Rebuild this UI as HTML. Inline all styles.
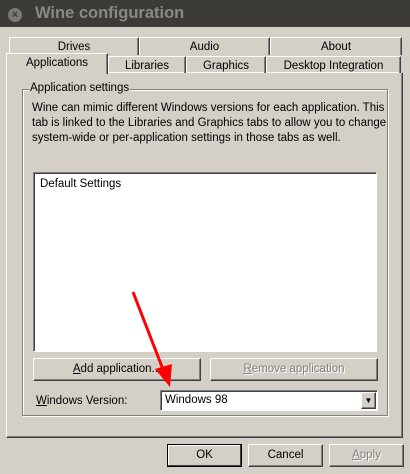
<!DOCTYPE html>
<html><head><style>
*{margin:0;padding:0;box-sizing:border-box}
body{width:410px;height:474px;background:#d4d0c8;font-family:"Liberation Sans",sans-serif;font-size:11.5px;color:#000;position:relative;overflow:hidden}
.a{position:absolute}
.tab{position:absolute;border:1px solid #fff;border-right:1px solid #404040;border-bottom:none;text-align:center;line-height:18px;box-shadow:inset -1px 0 #808080}
.btn{position:absolute;background:#d4d0c8;border:1px solid;border-color:#fff #404040 #404040 #fff;box-shadow:inset -1px -1px #808080;text-align:center;line-height:21px}
.sunk{position:absolute;border:1px solid;border-color:#808080 #fff #fff #808080;box-shadow:inset 1px 1px #404040;background:#fff}
u{text-decoration:underline}
.dis{color:#808080;text-shadow:1px 1px #fff}
</style></head><body>
<div class="a" style="left:0;top:0;width:410px;height:27px;background:#3c3b37"></div>
<div class="a" style="left:8px;top:8px;width:14px;height:14px;border-radius:50%;background:#7a7975;color:#3c3b37;font-size:11px;line-height:14px;text-align:center;font-weight:bold">×</div>
<div class="a" style="left:35px;top:4px;color:#8a8882;font-size:16.5px;font-weight:bold">Wine configuration</div>

<div class="tab" style="left:9px;top:37px;width:130px;height:18px">Drives</div>
<div class="tab" style="left:139px;top:37px;width:131px;height:18px">Audio</div>
<div class="tab" style="left:270px;top:37px;width:132px;height:18px">About</div>
<div class="a" style="left:6px;top:72px;width:397px;height:366px;border:1px solid;border-color:#fff #404040 #404040 #fff;box-shadow:inset -1px -1px #808080"></div>
<div class="tab" style="left:108px;top:56px;width:78px;height:17px">Libraries</div>
<div class="tab" style="left:186px;top:56px;width:80px;height:17px">Graphics</div>
<div class="tab" style="left:266px;top:56px;width:135px;height:17px">Desktop Integration</div>
<div class="tab" style="left:6px;top:53px;width:102px;height:21px;background:#d4d0c8;line-height:19px">Applications</div>

<div class="a" style="left:22px;top:89px;width:366px;height:327px;border:1px solid #808080;box-shadow:1px 1px #fff,inset 1px 1px #fff"></div>
<div class="a" style="left:29px;top:82px;background:#d4d0c8;padding:0 1px">Application settings</div>
<div class="a" style="left:32px;top:101px;line-height:15px;width:355px">Wine can mimic different Windows versions for each application. This tab is linked to the Libraries and Graphics tabs to allow you to change system-wide or per-application settings in those tabs as well.</div>

<div class="sunk" style="left:33px;top:172px;width:344px;height:180px"><div style="padding:5px 6px">Default Settings</div></div>

<div class="btn" style="left:33px;top:358px;width:168px;height:23px"><u>A</u>dd application...</div>
<div class="btn dis" style="left:210px;top:358px;width:168px;height:23px"><u>R</u>emove application</div>

<div class="a" style="left:36px;top:395px"><u>W</u>indows Version:</div>
<div class="sunk" style="left:160px;top:390px;width:218px;height:21px"><div style="padding:3px 4px">Windows 98</div>
<div class="btn" style="left:200px;top:1px;width:15px;height:17px;font-size:8px;line-height:15px">▼</div></div>

<div class="btn" style="left:167px;top:444px;width:75px;height:23px;border:1px solid #000;box-shadow:inset -1px -1px #404040,inset 1px 1px #fff">OK</div>
<div class="btn" style="left:248px;top:444px;width:75px;height:23px">Cancel</div>
<div class="btn dis" style="left:329px;top:444px;width:75px;height:23px"><u>A</u>pply</div>

<svg class="a" style="left:0;top:0" width="410" height="474">
<line x1="133" y1="292" x2="164" y2="372" stroke="#f00" stroke-width="3"/>
<polygon points="170,387 155,369 172,364" fill="#f00"/>
</svg>
</body></html>
